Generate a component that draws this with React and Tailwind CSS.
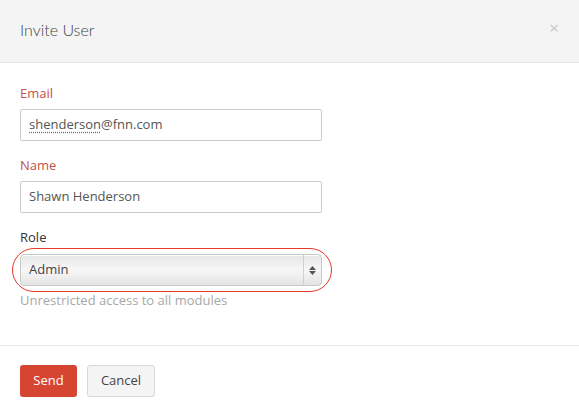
import React from 'react';

const font = { fontFamily: '"Open Sans", "Liberation Sans", sans-serif' };

const Field = ({ label, value, spell }) => (
  <div className="mb-[16px]">
    <label className="block text-[13px] leading-[16px] text-[#c4514a] mb-[8px]">{label}</label>
    <div className="w-[302px] h-[32px] border border-[#cccccc] rounded-[2px] bg-white flex items-center px-[8px] text-[13px] text-[#555]">
      {spell ? (
        <span>
          <span className="underline decoration-dotted decoration-[#e33] underline-offset-[3px]">shenderson</span>@fnn.com
        </span>
      ) : (
        value
      )}
    </div>
  </div>
);

export default function App() {
  return (
    <div className="w-[579px] h-[417px] bg-white flex flex-col" style={font}>
      {/* Header */}
      <div className="h-[63px] bg-[#f4f4f4] border-b border-[#e6e6e6] flex items-center justify-between pl-[20px] pr-[20px]">
        <h3 className="text-[16px] text-[#444] -mt-[2px]" style={{ fontFamily: 'Lato, "Open Sans", sans-serif', fontWeight: 300 }}>Invite User</h3>
        <span className="text-[17px] text-[#c8c8c8] leading-none -mt-[8px]">×</span>
      </div>

      {/* Body */}
      <div className="h-[283px] px-[20px] pt-[22px] border-b border-[#e8e8e8]">
        <Field label="Email" spell />
        <Field label="Name" value="Shawn Henderson" />

        <label className="block text-[13px] leading-[16px] text-[#333] mb-[9px]">Role</label>
        <div className="relative w-[302px]">
          <div className="absolute -left-[8px] -top-[6px] w-[320px] h-[44px] rounded-full border border-[#e8372b]" />
          <div className="h-[32px] border border-[#c8c8c8] rounded-[4px] flex items-center bg-gradient-to-b from-[#e6e6e6] via-[#f7f7f7] to-[#e4e4e4] shadow-[inset_0_1px_0_#fff]">
            <span className="flex-1 pl-[8px] text-[13px] text-[#444]">Admin</span>
            <div className="w-[18px] h-full border-l border-[#d0d0d0] flex flex-col items-center justify-center gap-[1px]">
              <svg width="7" height="4" viewBox="0 0 7 4"><path d="M3.5 0L7 4H0z" fill="#555" /></svg>
              <svg width="7" height="4" viewBox="0 0 7 4"><path d="M0 0h7L3.5 4z" fill="#555" /></svg>
            </div>
          </div>
        </div>
        <p className="mt-[5px] text-[13px] text-[#a8a8a8]">Unrestricted access to all modules</p>
      </div>

      {/* Footer */}
      <div className="flex-1 px-[20px] flex items-start pt-[19px] gap-[10px]">
        <button className="h-[32px] w-[57px] rounded-[3px] bg-[#d64532] text-white text-[13px]">Send</button>
        <button className="h-[32px] w-[68px] rounded-[3px] bg-[#f4f4f4] border border-[#d8d8d8] text-[#444] text-[13px]">Cancel</button>
      </div>
    </div>
  );
}
